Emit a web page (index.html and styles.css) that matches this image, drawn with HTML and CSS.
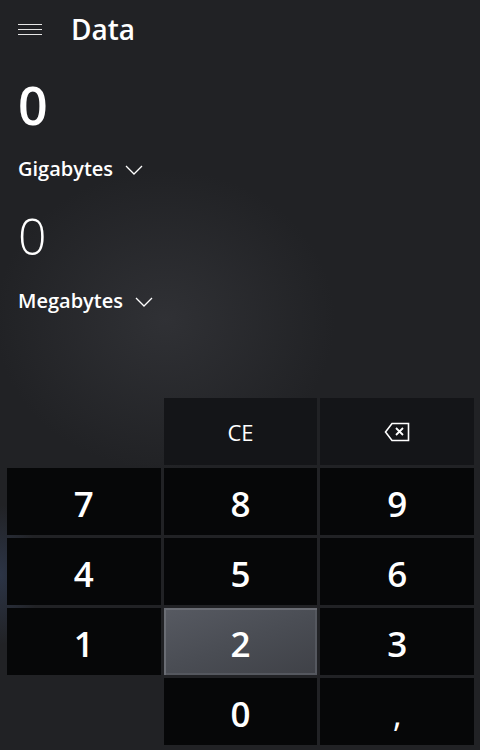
FILE: index.html
```html
<!DOCTYPE html>
<html>
<head>
<meta charset="utf-8">
<link rel="stylesheet" href="styles.css">
</head>
<body>
<div class="app">
  <header class="header">
    <div class="hamburger"><span></span><span></span><span></span></div>
    <div class="title">Data</div>
  </header>
  <div class="value value-from">0</div>
  <div class="unit unit-from">Gigabytes <svg class="chev" width="18" height="10" viewBox="0 0 18 10"><path d="M1 1 L9 9 L17 1" fill="none" stroke="#fff" stroke-width="1.3"/></svg></div>
  <div class="value value-to">0</div>
  <div class="unit unit-to">Megabytes <svg class="chev" width="18" height="10" viewBox="0 0 18 10"><path d="M1 1 L9 9 L17 1" fill="none" stroke="#fff" stroke-width="1.3"/></svg></div>
  <div class="keypad">
    <div class="key blank"></div>
    <div class="key op ce">CE</div>
    <div class="key op"><svg width="26" height="20" viewBox="0 0 26 20"><path d="M8 1.5 H24.5 V18.5 H8 L1.5 10 Z" fill="none" stroke="#fff" stroke-width="1.6" stroke-linejoin="miter"/><path d="M12 6 L19 13 M19 6 L12 13" stroke="#fff" stroke-width="1.8"/></svg></div>
    <div class="key num">7</div>
    <div class="key num">8</div>
    <div class="key num">9</div>
    <div class="key num">4</div>
    <div class="key num">5</div>
    <div class="key num">6</div>
    <div class="key num">1</div>
    <div class="key num hover">2</div>
    <div class="key num">3</div>
    <div class="key blank"></div>
    <div class="key num">0</div>
    <div class="key num comma">,</div>
  </div>
</div>
</body>
</html>
```
FILE: styles.css
```css
html, body {
  margin: 0;
  padding: 0;
}
body {
  width: 480px;
  height: 750px;
  overflow: hidden;
  font-family: "Open Sans", "Noto Sans", sans-serif;
  color: #fff;
  background:
    radial-gradient(ellipse 40px 70px at 0px 575px, rgba(60,80,120,0.4), rgba(60,80,120,0) 100%),
    radial-gradient(ellipse 170px 150px at 165px 320px, rgba(60,61,66,0.55), rgba(60,61,66,0) 100%),
    #212225;
}
.app {
  display: flex;
  flex-direction: column;
  height: 750px;
}
.header {
  display: flex;
  align-items: flex-start;
  height: 79px;
}
.hamburger {
  display: flex;
  flex-direction: column;
  gap: 4px;
  margin: 24px 0 0 18px;
  width: 24px;
}
.hamburger span {
  display: block;
  height: 1px;
  background: #e6e6e6;
}
.title {
  margin: 15px 0 0 29px;
  font-size: 28px;
  font-weight: 600;
  line-height: 1;
}
.value {
  padding-left: 18px;
  line-height: 1;
}
.value-from {
  font-size: 52px;
  font-weight: 600;
  height: 80px;
}
.unit {
  display: flex;
  align-items: center;
  padding-left: 18px;
  font-size: 20px;
  font-weight: 600;
  line-height: 1;
  height: 20px;
}
.chev {
  margin-left: 12px;
  margin-top: 2px;
}
.unit-from {
  margin-bottom: 32px;
}
.value-to {
  font-size: 50px;
  font-weight: 300;
  height: 80px;
}
.keypad {
  margin-top: 87px;
  display: grid;
  grid-template-columns: repeat(3, 1fr);
  grid-template-rows: repeat(5, 67px);
  gap: 3px;
  padding: 0 6px 5px 7px;
}
.key {
  display: flex;
  align-items: center;
  justify-content: center;
  line-height: 1;
}
.blank {
  background: transparent;
}
.op {
  background: #141518;
}
.ce {
  font-size: 22px;
  font-weight: 400;
  padding-top: 1px;
}
.num {
  background: #060708;
  font-size: 35px;
  font-weight: 600;
  padding-top: 3px;
}
.comma {
  font-weight: 400;
}
.hover {
  background: linear-gradient(160deg, #575a62 0%, #4a4d54 50%, #3f4147 100%);
  box-shadow: inset 2px 2px 0 0 #6a6d74, inset -2px -2px 0 0 #55585f;
}
```
